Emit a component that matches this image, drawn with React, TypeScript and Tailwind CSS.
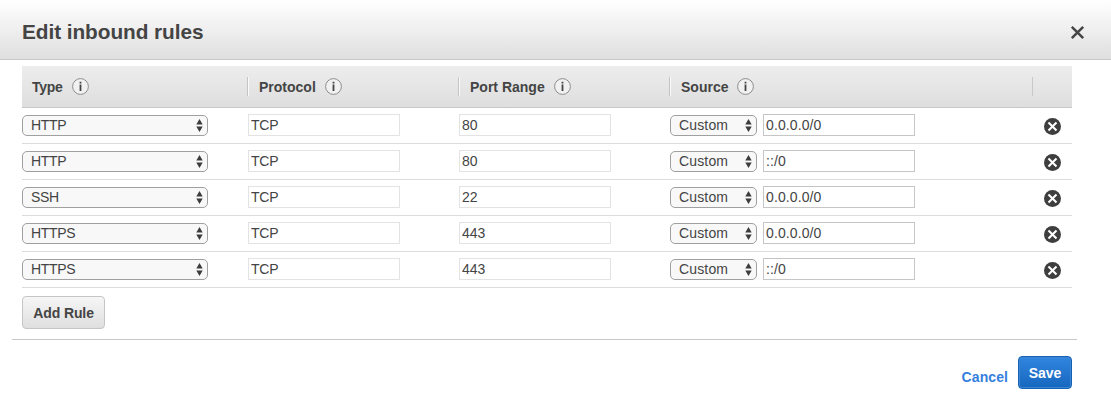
import React from "react";

type Rule = { type: string; protocol: string; port: string; source: string };

const rules: Rule[] = [
  { type: "HTTP", protocol: "TCP", port: "80", source: "0.0.0.0/0" },
  { type: "HTTP", protocol: "TCP", port: "80", source: "::/0" },
  { type: "SSH", protocol: "TCP", port: "22", source: "0.0.0.0/0" },
  { type: "HTTPS", protocol: "TCP", port: "443", source: "0.0.0.0/0" },
  { type: "HTTPS", protocol: "TCP", port: "443", source: "::/0" },
];

const columns = "grid grid-cols-[226px_211px_211px_362px_40px]";

function InfoIcon() {
  return (
    <svg width="17" height="17" viewBox="0 0 17 17" className="block shrink-0">
      <circle cx="8.5" cy="8.5" r="7.9" fill="#f1f1f1" stroke="#8c8c8c" strokeWidth="1" />
      <path d="M7.6 3.7h1.8v1.7H7.6zM7.6 6.4h1.8v6.7H7.6z" fill="#444" />
    </svg>
  );
}

function HeaderCell({ label, width, first = false }: { label: string; width: string; first?: boolean }) {
  return (
    <div className="flex items-center">
      {!first && <span className="-ml-px h-[19px] w-0.5 border-l border-r border-l-[#c4c4c4] border-r-[#fafafa]" />}
      <span className={`whitespace-nowrap ${first ? "ml-2.5 tracking-[-0.3px]" : "ml-2.5"} ${width}`}>{label}</span>
      <InfoIcon />
    </div>
  );
}

function Select({ value, width, tracking = "" }: { value: string; width: string; tracking?: string }) {
  return (
    <div
      className={`mt-px flex h-[21px] items-center justify-between rounded-[5px] border border-[#a0a0a0] bg-[#f8f8f8] pr-1 pl-2 ${width}`}
    >
      <span className={`leading-[19px] ${tracking}`}>{value}</span>
      <svg width="7" height="13" viewBox="0 0 7 13" fill="#3c3c3c">
        <path d="M3.5 0L6.7 5.5H0.3zM3.5 13L6.7 7.5H0.3z" />
      </svg>
    </div>
  );
}

function Field({ value, label, border }: { value: string; label: string; border: string }) {
  return (
    <input
      aria-label={label}
      defaultValue={value}
      className={`h-[22px] w-[152px] border bg-white px-0.5 pb-px leading-5 outline-none ${border}`}
    />
  );
}

function RemoveIcon() {
  return (
    <svg width="17" height="17" viewBox="0 0 17 17">
      <circle cx="8.5" cy="8.5" r="8.5" fill="#3e3e3e" />
      <path d="M4.5 4.5l8 8M12.5 4.5l-8 8" stroke="#fff" strokeWidth="2.1" />
    </svg>
  );
}

export default function App() {
  return (
    <div className="flex h-[408px] w-[1111px] flex-col overflow-hidden bg-white font-['Liberation_Sans',Arial,sans-serif] text-sm text-[#444]">
      <header className="flex h-[60px] shrink-0 items-center justify-between border-b border-[#c8c8c8] bg-linear-to-b from-white to-[#dfdfdf] pr-[26px] pl-[22px]">
        <h1 className="pt-1 text-[20.8px] leading-6 font-bold tracking-[-0.06px]">Edit inbound rules</h1>
        <button aria-label="Close" className="pt-[5px]">
          <svg width="15" height="15" viewBox="0 0 15 15" className="block">
            <path d="M1.8 1.8l11.4 11.4M13.2 1.8L1.8 13.2" stroke="#444" strokeWidth="2.5" />
          </svg>
        </button>
      </header>

      <main className="mt-1.5 ml-[22px] w-[1050px]">
        <div className={`${columns} h-[42px] border-b border-[#c8c8c8] bg-linear-to-b from-[#ededed] to-[#dedede] font-bold`}>
          <HeaderCell label="Type" width="w-10" first />
          <HeaderCell label="Protocol" width="w-[66px]" />
          <HeaderCell label="Port Range" width="w-[84px]" />
          <HeaderCell label="Source" width="w-14" />
          <div className="flex items-center">
            <span className="h-[19px] w-px bg-[#c8c8c8]" />
          </div>
        </div>
        {rules.map((rule, i) => (
          <div key={i} className={`${columns} h-9 items-start border-b border-[#ddd] pt-1.5`}>
            <Select value={rule.type} width="w-[186px]" tracking="tracking-[-0.35px]" />
            <Field value={rule.protocol} label="Protocol" border="border-[#e3e3e3] tracking-[-0.2px]" />
            <Field value={rule.port} label="Port Range" border="border-[#e3e3e3]" />
            <div className="flex gap-1.5">
              <Select value="Custom" width="w-[87px]" tracking="tracking-[0.15px]" />
              <Field value={rule.source} label="Source" border="border-[#c6c6c6] tracking-[0.1px]" />
            </div>
            <button aria-label="Remove rule" className="mt-1 ml-3 w-[17px]">
              <RemoveIcon />
            </button>
          </div>
        ))}
        <button className="mt-2 block h-[33px] w-[83px] rounded-[4px] border border-[#c5c5c5] bg-linear-to-b from-[#f6f6f6] to-[#dfdfdf] font-bold tracking-[-0.1px]">
          Add Rule
        </button>
      </main>

      <footer className="mt-2.5 ml-3 flex w-[1065px] justify-end border-t border-[#c8c8c8] pt-4 pr-[5px] font-bold">
        <a className="mt-[11px] mr-2.5 leading-5 tracking-[0.08px] text-[#3480dd]">Cancel</a>
        <button className="h-[33px] w-[54px] rounded-[4px] border border-[#1262b8] bg-linear-to-b from-[#3286df] to-[#1466be] text-white shadow-[inset_0_0_0_1px_#3d85cf]">
          Save
        </button>
      </footer>
    </div>
  );
}
